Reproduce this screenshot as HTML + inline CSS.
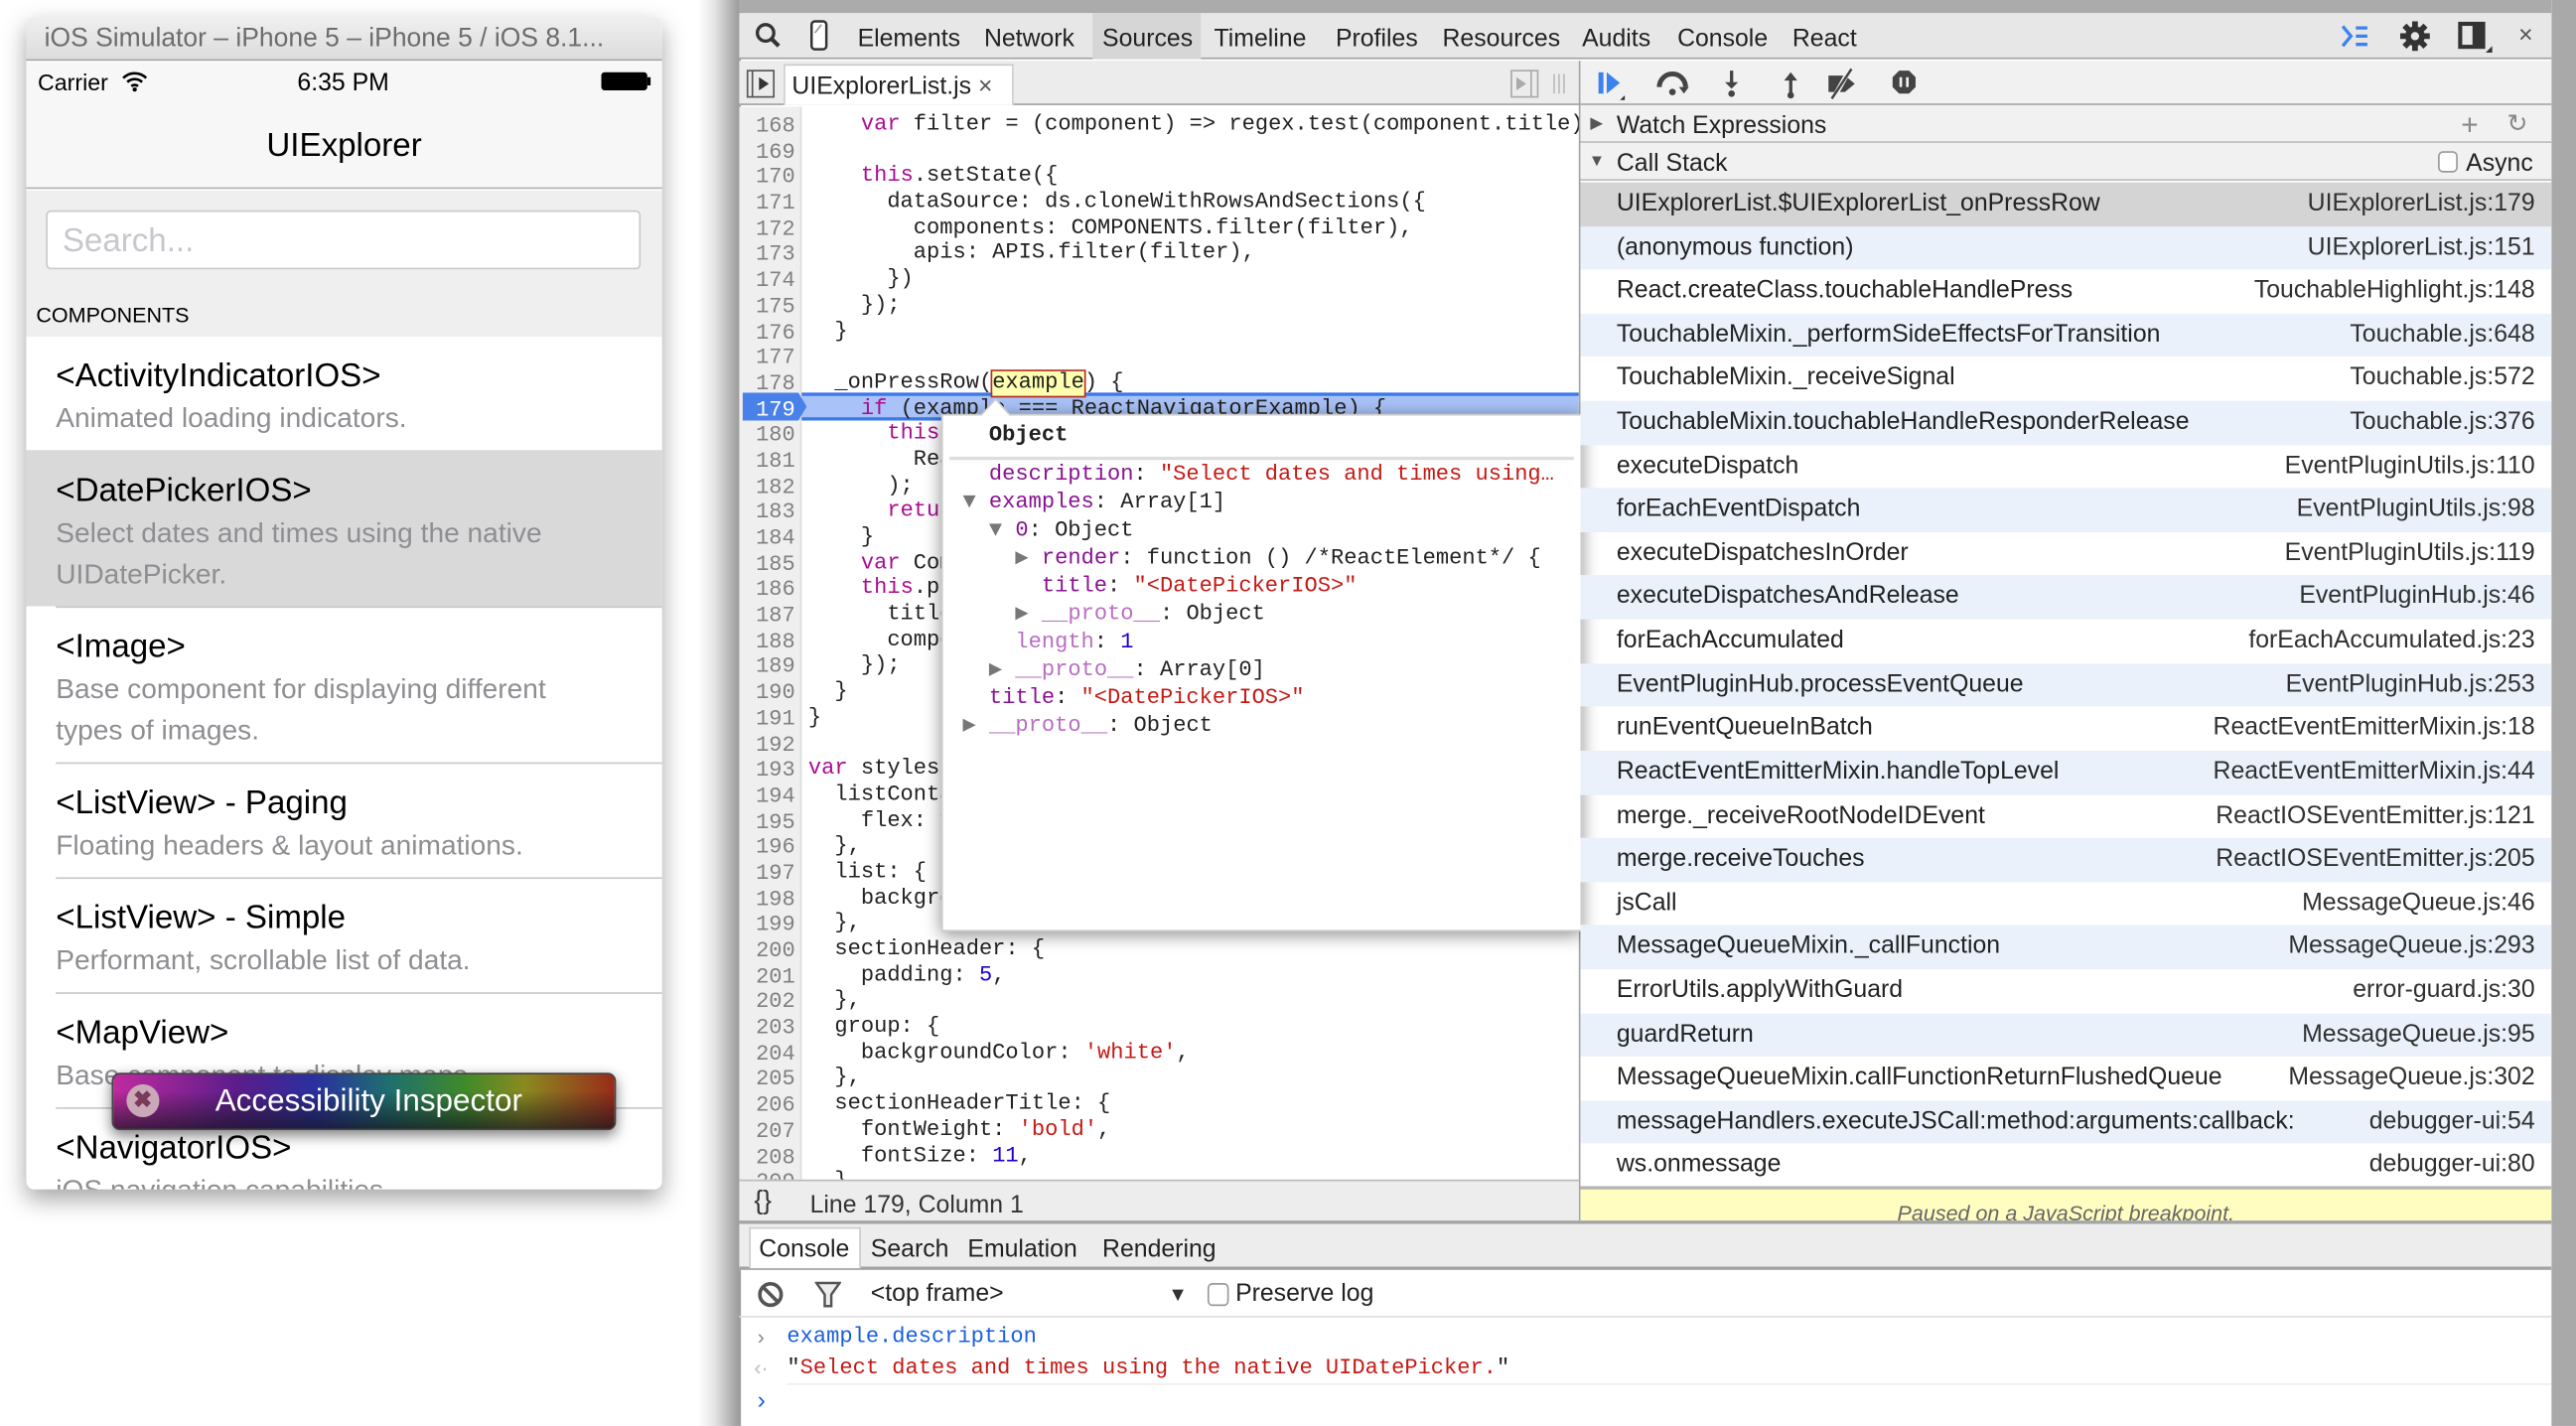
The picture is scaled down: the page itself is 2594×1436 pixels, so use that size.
<!DOCTYPE html>
<html><head><meta charset="utf-8"><style>
*{margin:0;padding:0;box-sizing:border-box}
html,body{width:2594px;height:1436px;overflow:hidden;background:#fff}
#w{position:absolute;left:0;top:0;width:1568px;height:868px;transform:scale(1.65434);transform-origin:0 0;font-family:"Liberation Sans",sans-serif;overflow:hidden}
.a{position:absolute}
.t{position:absolute;white-space:pre;line-height:1}
.mono{font-family:"Liberation Mono",monospace}
.k{color:#aa0d91}.s{color:#c41a16}.n{color:#1c00cf}.p{color:#881391}
.ui{font-size:15px;color:#222}
.r{height:26.62px;padding:0 10px 0 22px;display:flex;justify-content:space-between;white-space:nowrap}
.r:nth-child(even){background:#eaf1fb}
.r span:last-child{color:#303030}
</style></head><body><div id="w">
<div class="a" style="left:425px;top:0;width:25px;height:868px;background:linear-gradient(90deg,#fff,#e4e4e4 40%,#9a9a9a)"></div>
<div class="a" style="left:1553px;top:0;width:15px;height:868px;background:#a9a9a9"></div>

<div class="a" style="left:16px;top:10px;width:387px;height:714px;border-radius:5px;overflow:hidden;box-shadow:0 6px 14px rgba(0,0,0,.35);background:#fff">
 <div class="a" style="left:0;top:0;width:387px;height:27px;background:linear-gradient(#f0f0f0,#dcdcdc);border-bottom:1px solid #a5a5a5"></div>
 <div class="t" style="left:11px;top:6px;font-size:16px;color:#6d6d6d">iOS Simulator – iPhone 5 – iPhone 5 / iOS 8.1...</div>
 <div class="a" style="left:0;top:28px;width:387px;height:77px;background:#f7f7f7;border-bottom:1px solid #b2b2b2"></div>
 <div class="t" style="left:7px;top:33px;font-size:14px;color:#000">Carrier</div>
 <svg class="a" style="left:58px;top:33px" width="16" height="13" viewBox="0 0 16 13"><path d="M1 4.5A10 10 0 0 1 15 4.5M3.5 7A6.5 6.5 0 0 1 12.5 7M6 9.5A3 3 0 0 1 10 9.5" stroke="#000" stroke-width="1.6" fill="none"/><circle cx="8" cy="11.5" r="1.3"/></svg>
 <div class="t" style="left:165px;top:33px;font-size:15px;color:#000">6:35 PM</div>
 <div class="a" style="left:350px;top:34px;width:28px;height:11px;background:#000;border-radius:2px"></div>
 <div class="a" style="left:378px;top:37px;width:2px;height:5px;background:#000"></div>
 <div class="t" style="left:0;width:387px;text-align:center;top:69px;font-size:20px;color:#000">UIExplorer</div>
 <div class="a" style="left:0;top:106px;width:387px;height:89px;background:#efefef"></div>
 <div class="a" style="left:12px;top:118px;width:362px;height:36px;background:#fff;border:1px solid #c9c9c9;border-radius:3px"></div>
 <div class="t" style="left:22px;top:127px;font-size:20px;color:#c7c7cd">Search...</div>
 <div class="t" style="left:6px;top:175px;font-size:13px;color:#000">COMPONENTS</div>
 <div class="a" style="left:0;top:264px;width:387px;height:95px;background:#d9d9d9"></div>
 <div class="t" style="left:18px;top:209px;font-size:20px">&lt;ActivityIndicatorIOS&gt;</div>
 <div class="t" style="left:18px;top:236px;font-size:17px;color:#8e8e93">Animated loading indicators.</div>
 <div class="t" style="left:18px;top:279px;font-size:20px">&lt;DatePickerIOS&gt;</div>
 <div class="t" style="left:18px;top:302px;font-size:17px;color:#8e8e93;line-height:25px">Select dates and times using the native<br>UIDatePicker.</div>
 <div class="a" style="left:18px;top:359px;width:369px;height:1px;background:#c8c7cc"></div>
 <div class="t" style="left:18px;top:374px;font-size:20px">&lt;Image&gt;</div>
 <div class="t" style="left:18px;top:397px;font-size:17px;color:#8e8e93;line-height:25px">Base component for displaying different<br>types of images.</div>
 <div class="a" style="left:18px;top:454px;width:369px;height:1px;background:#c8c7cc"></div>
 <div class="t" style="left:18px;top:469px;font-size:20px">&lt;ListView&gt; - Paging</div>
 <div class="t" style="left:18px;top:496px;font-size:17px;color:#8e8e93">Floating headers &amp; layout animations.</div>
 <div class="a" style="left:18px;top:524px;width:369px;height:1px;background:#c8c7cc"></div>
 <div class="t" style="left:18px;top:539px;font-size:20px">&lt;ListView&gt; - Simple</div>
 <div class="t" style="left:18px;top:566px;font-size:17px;color:#8e8e93">Performant, scrollable list of data.</div>
 <div class="a" style="left:18px;top:594px;width:369px;height:1px;background:#c8c7cc"></div>
 <div class="t" style="left:18px;top:609px;font-size:20px">&lt;MapView&gt;</div>
 <div class="t" style="left:18px;top:636px;font-size:17px;color:#8e8e93">Base component to display maps.</div>
 <div class="a" style="left:18px;top:664px;width:369px;height:1px;background:#c8c7cc"></div>
 <div class="t" style="left:18px;top:679px;font-size:20px">&lt;NavigatorIOS&gt;</div>
 <div class="t" style="left:18px;top:706px;font-size:17px;color:#8e8e93">iOS navigation capabilities.</div>
</div>
<div class="a" style="left:68px;top:653px;width:307px;height:35px;border-radius:5px;border:1px solid #444;box-shadow:0 3px 8px rgba(0,0,0,.5);background:linear-gradient(rgba(0,0,0,0) 30%,rgba(20,20,30,.7)),linear-gradient(90deg,#c02aa0,#5a1d8a 25%,#2a2fa0 40%,#1f6f6f 55%,#3f8a2a 70%,#8a8a20 82%,#9a2a1a)"></div>
<div class="a" style="left:77px;top:660px;width:20px;height:20px;border-radius:50%;background:#c9a8b8"></div>
<div class="t" style="left:81px;top:662px;font-size:14px;color:#7a3a5a;font-weight:bold">✖</div>
<div class="t" style="left:131px;top:661px;font-size:19px;color:#fff">Accessibility Inspector</div>

<div class="a" style="left:450px;top:0;width:1103px;height:868px;background:#fff;border-left:1px solid #999"></div>
<div class="a" style="left:450px;top:0;width:1103px;height:8px;background:#ababab"></div>
<div class="a" style="left:450px;top:8px;width:1103px;height:28px;background:#e7e7e7;border-bottom:1px solid #a3a3a3"></div>
<div class="a" style="left:665px;top:8px;width:66px;height:28px;background:#d6d6d6"></div>
<svg class="a" style="left:459px;top:13px" width="18" height="18" viewBox="0 0 18 18"><circle cx="7" cy="7" r="5" stroke="#333" stroke-width="2" fill="none"/><path d="M10.5 10.5L15 15" stroke="#333" stroke-width="2.5"/></svg>
<svg class="a" style="left:493px;top:12px" width="12" height="20" viewBox="0 0 12 20"><rect x="1" y="1" width="9" height="17" rx="2" stroke="#333" stroke-width="1.5" fill="#fff"/><path d="M3 8L7 3" stroke="#999"/></svg>
<div class="t ui" style="left:522px;top:16px">Elements</div>
<div class="t ui" style="left:599px;top:16px">Network</div>
<div class="t ui" style="left:671px;top:16px">Sources</div>
<div class="t ui" style="left:739px;top:16px">Timeline</div>
<div class="t ui" style="left:813px;top:16px">Profiles</div>
<div class="t ui" style="left:878px;top:16px">Resources</div>
<div class="t ui" style="left:963px;top:16px">Audits</div>
<div class="t ui" style="left:1021px;top:16px">Console</div>
<div class="t ui" style="left:1091px;top:16px">React</div>
<svg class="a" style="left:1424px;top:14px" width="20" height="16" viewBox="0 0 20 16"><path d="M2 2L7 8L2 14" stroke="#3b82f0" stroke-width="2" fill="none"/><path d="M10 3h7M10 8h7M10 13h7" stroke="#3b82f0" stroke-width="2"/></svg>
<svg class="a" style="left:1460px;top:12px" width="20" height="20" viewBox="0 0 20 20"><g stroke="#333" stroke-width="3.5"><path d="M10 1v18M1 10h18M3.6 3.6l12.8 12.8M16.4 3.6L3.6 16.4"/></g><circle cx="10" cy="10" r="6" fill="#333"/><circle cx="10" cy="10" r="2.5" fill="#e7e7e7"/></svg>
<svg class="a" style="left:1496px;top:13px" width="22" height="20" viewBox="0 0 22 20"><rect x="1.5" y="1.5" width="14" height="14" stroke="#333" stroke-width="2.5" fill="none"/><rect x="9" y="2" width="6" height="13" fill="#333"/><path d="M17 19h4v-4z" fill="#333"/></svg>
<div class="t" style="left:1533px;top:14px;font-size:15px;color:#555">×</div>

<div class="a" style="left:450px;top:37px;width:512px;height:27px;background:#ececec;border-bottom:1px solid #a3a3a3"></div>
<svg class="a" style="left:454px;top:42px" width="18" height="18" viewBox="0 0 18 18"><rect x="1" y="1" width="16" height="16" stroke="#555" fill="none"/><path d="M4 1v16" stroke="#555"/><path d="M8 5l6 4-6 4z" fill="#333"/></svg>
<div class="a" style="left:477px;top:39px;width:140px;height:25px;background:#fff;border:1px solid #ccc;border-bottom:none"></div>
<div class="t ui" style="left:482px;top:45px">UIExplorerList.js <span style="color:#555">×</span></div>
<svg class="a" style="left:919px;top:42px" width="40" height="18" viewBox="0 0 40 18"><rect x="1" y="1" width="16" height="16" stroke="#aaa" fill="none"/><path d="M13 1v16" stroke="#aaa"/><path d="M4 5l6 4-6 4z" fill="#aaa"/><path d="M27 3v12M30 3v12M33 3v12" stroke="#bbb"/></svg>
<div class="a" style="left:961px;top:37px;width:1px;height:706px;background:#a3a3a3"></div>

<div class="a" style="left:450px;top:65px;width:511px;height:653px;overflow:hidden">
 <div class="a" style="left:0;top:0;width:38px;height:653px;background:#efefef;border-right:1px solid #ddd"></div>
 <div class="a" style="left:38px;top:174px;width:473px;height:17px;background:#a9c2f7;border-top:2px solid #3c78e8;border-bottom:2px solid #3c78e8"></div>
 <svg class="a" style="left:2px;top:174px" width="40" height="17" viewBox="0 0 40 17"><path d="M0 0h34l5 8.5-5 8.5H0z" fill="#4a81e9"/></svg>
 <div class="a mono" style="left:0;top:4px;width:34px;text-align:right;font-size:13.3px;line-height:15.68px;color:#808080;white-space:pre">168
169
170
171
172
173
174
175
176
177
178
<span style="color:#fff">179</span>
180
181
182
183
184
185
186
187
188
189
190
191
192
193
194
195
196
197
198
199
200
201
202
203
204
205
206
207
208
209</div>
 <div class="a mono" style="left:42px;top:4px;font-size:13.33px;line-height:15.68px;color:#222;white-space:pre">    <span class="k">var</span> filter = (component) =&gt; regex.test(component.title)

    <span class="k">this</span>.setState({
      dataSource: ds.cloneWithRowsAndSections({
        components: COMPONENTS.filter(filter),
        apis: APIS.filter(filter),
      })
    });
  }

  _onPressRow(<span style="background:#ffffb0;outline:1.5px solid #b5301e">example</span>) {
    <span class="k">if</span> (example === ReactNavigatorExample) {
      <span class="k">this</span>.props.navigator.replace(
        ReactNavigatorExample
      );
      <span class="k">return</span>;
    }
    <span class="k">var</span> Component = example.examples ?
    <span class="k">this</span>.props.navigator.push({
      title: Component.title,
      component: Component,
    });
  }
}

<span class="k">var</span> styles = StyleSheet.create({
  listContainer: {
    flex: <span class="n">1</span>,
  },
  list: {
    backgroundColor: <span class="s">'#eeeeee'</span>,
  },
  sectionHeader: {
    padding: <span class="n">5</span>,
  },
  group: {
    backgroundColor: <span class="s">'white'</span>,
  },
  sectionHeaderTitle: {
    fontWeight: <span class="s">'bold'</span>,
    fontSize: <span class="n">11</span>,
  },</div>
</div>

<div class="a" style="left:573px;top:252px;width:390px;height:315px;background:#fff;box-shadow:0 2px 10px rgba(0,0,0,.45);border:1px solid #ccc"></div>
<svg class="a" style="left:597px;top:242px" width="18" height="11" viewBox="0 0 18 11"><path d="M0 11L9 1l9 10z" fill="#fff" stroke="#ccc"/><path d="M1 11h16" stroke="#fff" stroke-width="2"/></svg>
<div class="a mono" style="left:602px;top:258px;font-size:13.33px;font-weight:bold;color:#222">Object</div>
<div class="a" style="left:578px;top:278px;width:380px;height:2px;background:#ddd"></div>
<div class="a mono" style="left:586px;top:282px;font-size:13.33px;line-height:16.95px;color:#222;white-space:pre">  <span class="p">description</span>: <span class="s">"Select dates and times using…</span>
<span style="color:#777">▼</span> <span class="p">examples</span>: Array[1]
  <span style="color:#777">▼</span> <span class="p">0</span>: Object
    <span style="color:#777">▶</span> <span class="p">render</span>: function () /*ReactElement*/ {
      <span class="p">title</span>: <span class="s">"&lt;DatePickerIOS&gt;"</span>
    <span style="color:#777">▶</span> <span style="color:#b86fc0">__proto__</span>: Object
    <span style="color:#b86fc0">length</span>: <span class="n">1</span>
  <span style="color:#777">▶</span> <span style="color:#b86fc0">__proto__</span>: Array[0]
  <span class="p">title</span>: <span class="s">"&lt;DatePickerIOS&gt;"</span>
<span style="color:#777">▶</span> <span style="color:#b86fc0">__proto__</span>: Object</div>

<div class="a" style="left:450px;top:718px;width:511px;height:25px;background:#ededed;border-top:1px solid #bbb"></div>
<div class="t" style="left:459px;top:724px;font-size:16px;color:#333">{}</div>
<div class="t ui" style="left:493px;top:726px;color:#333">Line 179, Column 1</div>

<div class="a" style="left:962px;top:37px;width:591px;height:27px;background:#f1f1f1;border-bottom:1px solid #a3a3a3"></div>
<svg class="a" style="left:970px;top:41px" width="210" height="20" viewBox="0 0 210 20"><rect x="3" y="3" width="3" height="13" fill="#3b82f0"/><path d="M8 3l8 6.5-8 6.5z" fill="#3b82f0"/><path d="M16 20h3v-3z" fill="#333"/>
<path d="M40 12a8 8 0 0 1 16 0" stroke="#444" stroke-width="3" fill="none"/><path d="M52 12h6l-3 4z" fill="#444"/><circle cx="48" cy="15" r="2" fill="#444"/>
<path d="M84 2v8" stroke="#444" stroke-width="2"/><path d="M80 9h8l-4 4z" fill="#444"/><circle cx="84" cy="16" r="2" fill="#444"/>
<path d="M120 7v9" stroke="#444" stroke-width="2"/><path d="M116 8h8l-4-5z" fill="#444"/><circle cx="120" cy="17" r="2" fill="#444"/>
<path d="M143 5h10l6 5-6 5h-10z" fill="#444"/><path d="M146 19L156 1" stroke="#f1f1f1" stroke-width="3"/><path d="M145 19L157 1" stroke="#444" stroke-width="1.5"/>
<path d="M186 2h6l4 4v6l-4 4h-6l-4-4V6z" fill="#444"/><path d="M187 6v6M191 6v6" stroke="#f1f1f1" stroke-width="1.6"/></svg>
<div class="a" style="left:962px;top:64px;width:591px;height:23px;background:#f1f1f1;border-bottom:1px solid #bbb"></div>
<div class="t" style="left:968px;top:71px;font-size:10px;color:#555">▶</div>
<div class="t ui" style="left:984px;top:69px">Watch Expressions</div>
<div class="t" style="left:1498px;top:67px;font-size:18px;color:#888">+</div>
<div class="t" style="left:1526px;top:68px;font-size:15px;color:#888">↻</div>
<div class="a" style="left:962px;top:87px;width:591px;height:23px;background:#f1f1f1;border-bottom:1px solid #bbb"></div>
<div class="t" style="left:967px;top:94px;font-size:10px;color:#555">▼</div>
<div class="t ui" style="left:984px;top:92px">Call Stack</div>
<div class="a" style="left:1484px;top:92px;width:12px;height:13px;border:1px solid #999;border-radius:3px;background:#fff"></div>
<div class="t ui" style="left:1501px;top:92px">Async</div>

<div class="a ui" style="left:962px;top:111px;width:591px;line-height:26.62px;font-size:15px;color:#222">
<div class="r" style="background:#d4d4d4"><span>UIExplorerList.$UIExplorerList_onPressRow</span><span>UIExplorerList.js:179</span></div>
<div class="r"><span>(anonymous function)</span><span>UIExplorerList.js:151</span></div>
<div class="r"><span>React.createClass.touchableHandlePress</span><span>TouchableHighlight.js:148</span></div>
<div class="r"><span>TouchableMixin._performSideEffectsForTransition</span><span>Touchable.js:648</span></div>
<div class="r"><span>TouchableMixin._receiveSignal</span><span>Touchable.js:572</span></div>
<div class="r"><span>TouchableMixin.touchableHandleResponderRelease</span><span>Touchable.js:376</span></div>
<div class="r"><span>executeDispatch</span><span>EventPluginUtils.js:110</span></div>
<div class="r"><span>forEachEventDispatch</span><span>EventPluginUtils.js:98</span></div>
<div class="r"><span>executeDispatchesInOrder</span><span>EventPluginUtils.js:119</span></div>
<div class="r"><span>executeDispatchesAndRelease</span><span>EventPluginHub.js:46</span></div>
<div class="r"><span>forEachAccumulated</span><span>forEachAccumulated.js:23</span></div>
<div class="r"><span>EventPluginHub.processEventQueue</span><span>EventPluginHub.js:253</span></div>
<div class="r"><span>runEventQueueInBatch</span><span>ReactEventEmitterMixin.js:18</span></div>
<div class="r"><span>ReactEventEmitterMixin.handleTopLevel</span><span>ReactEventEmitterMixin.js:44</span></div>
<div class="r"><span>merge._receiveRootNodeIDEvent</span><span>ReactIOSEventEmitter.js:121</span></div>
<div class="r"><span>merge.receiveTouches</span><span>ReactIOSEventEmitter.js:205</span></div>
<div class="r"><span>jsCall</span><span>MessageQueue.js:46</span></div>
<div class="r"><span>MessageQueueMixin._callFunction</span><span>MessageQueue.js:293</span></div>
<div class="r"><span>ErrorUtils.applyWithGuard</span><span>error-guard.js:30</span></div>
<div class="r"><span>guardReturn</span><span>MessageQueue.js:95</span></div>
<div class="r"><span>MessageQueueMixin.callFunctionReturnFlushedQueue</span><span>MessageQueue.js:302</span></div>
<div class="r"><span>messageHandlers.executeJSCall:method:arguments:callback:</span><span>debugger-ui:54</span></div>
<div class="r"><span>ws.onmessage</span><span>debugger-ui:80</span></div>
</div>
<div class="a" style="left:962px;top:722px;width:591px;height:21px;background:#fffdc0;border-top:2px solid #b5b5b5;overflow:hidden"></div>
<div class="t" style="left:962px;width:591px;text-align:center;top:732px;font-size:13px;font-style:italic;color:#666;height:11px;overflow:hidden">Paused on a JavaScript breakpoint.</div>

<div class="a" style="left:450px;top:743px;width:1103px;height:30px;background:#ededed;border-top:2px solid #a3a3a3;border-bottom:2px solid #a3a3a3"></div>
<div class="a" style="left:456px;top:747px;width:68px;height:25px;background:#fff;border:1px solid #ccc;border-bottom:none"></div>
<div class="t ui" style="left:462px;top:753px">Console</div>
<div class="t ui" style="left:530px;top:753px">Search</div>
<div class="t ui" style="left:589px;top:753px">Emulation</div>
<div class="t ui" style="left:671px;top:753px">Rendering</div>
<div class="a" style="left:450px;top:801px;width:1103px;height:1px;background:#e0e0e0"></div>
<svg class="a" style="left:460px;top:779px" width="18" height="18" viewBox="0 0 18 18"><circle cx="9" cy="9" r="6.5" stroke="#555" stroke-width="2.2" fill="none"/><path d="M4.5 4.5l9 9" stroke="#555" stroke-width="2.2"/></svg>
<svg class="a" style="left:496px;top:780px" width="16" height="16" viewBox="0 0 16 16"><path d="M1 1h14L10 8v7H6V8z" fill="#eee" stroke="#555" stroke-width="1.5"/></svg>
<div class="t ui" style="left:530px;top:780px">&lt;top frame&gt;</div>
<div class="t" style="left:711px;top:782px;font-size:12px;color:#333">▼</div>
<div class="a" style="left:735px;top:781px;width:13px;height:14px;border:1px solid #999;border-radius:3px;background:#fff"></div>
<div class="t ui" style="left:752px;top:780px">Preserve log</div>
<div class="t" style="left:461px;top:807px;font-size:13px;color:#888">›</div>
<div class="t mono" style="left:479px;top:808px;font-size:13.33px;color:#1a5fdc">example.description</div>
<div class="t" style="left:459px;top:826px;font-size:13px;color:#bbb">‹·</div>
<div class="t mono" style="left:479px;top:827px;font-size:13.33px;color:#c41a16"><span style="color:#222">"</span>Select dates and times using the native UIDatePicker.<span style="color:#222">"</span></div>
<div class="a" style="left:479px;top:842px;width:1074px;height:1px;background:#eee"></div>
<div class="t" style="left:461px;top:845px;font-size:15px;color:#1a5fdc">›</div>
</div></body></html>
